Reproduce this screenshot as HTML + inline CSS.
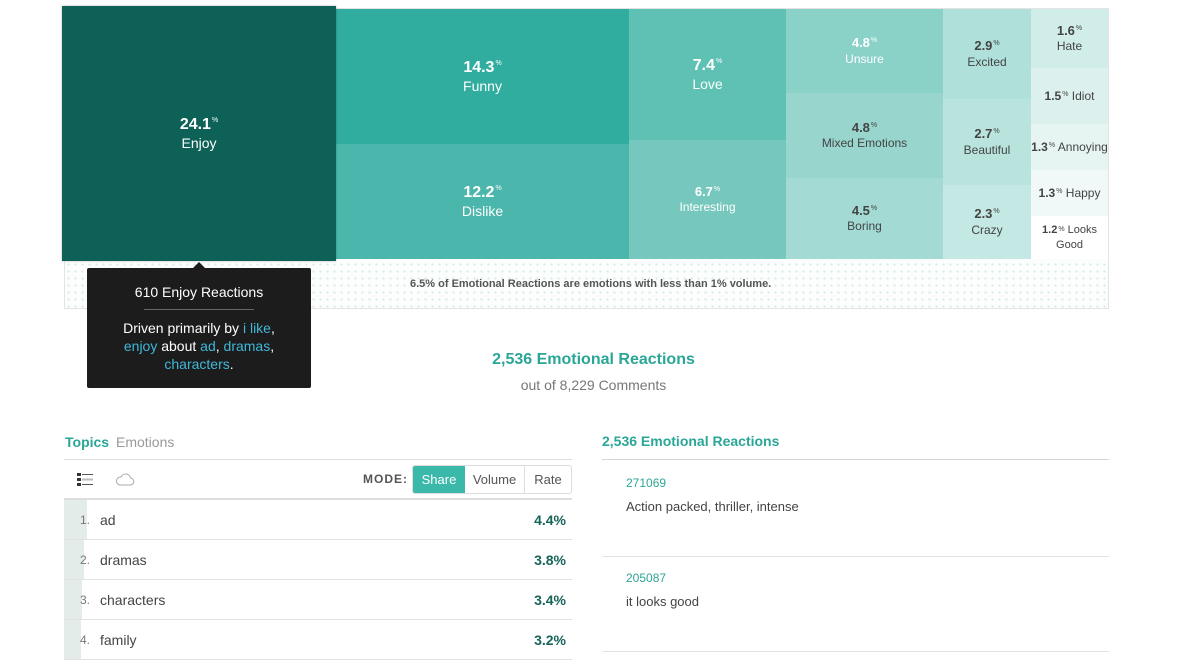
<!DOCTYPE html>
<html><head><meta charset="utf-8"><style>
*{box-sizing:border-box;margin:0;padding:0}
body{width:1177px;height:662px;overflow:hidden;background:#fff;font-family:"Liberation Sans",sans-serif;position:relative;color:#444}
.a{position:absolute}
.c{position:absolute;display:flex;flex-direction:column;align-items:center;justify-content:center;text-align:center;line-height:1.25}
.c b{font-size:16px;font-weight:bold}
.c b sup{font-size:7px;font-weight:normal;vertical-align:top;position:relative;top:2px;margin-left:1px}
.c span{font-size:14px}
.m b{font-size:13px}.m span{font-size:12px}
.s{font-size:12px}
.s b{font-size:12px}
.w{color:#fff}.d{color:#444}
.dots{background-color:#fcfefd;background-image:radial-gradient(#d6ebe7 1px,transparent 1.2px);background-size:7px 7px}
.hl{color:#3fb8d9}
.row{position:absolute;left:64px;width:508px;height:40px;border-bottom:1px solid #e2e2e2;font-size:14px}
.row .bar{position:absolute;left:0;top:0;bottom:0;background:#e4ecea}
.row .n{position:absolute;left:16px;top:13px;font-size:12px;color:#777}
.row .t{position:absolute;left:36px;top:12px;color:#444}
.row .v{position:absolute;right:6px;top:12px;color:#17655a;font-weight:bold}
</style></head><body>
<div class="a dots" style="left:64px;top:8px;width:1045px;height:301px;border:1px solid #e3e3e3"></div>
<div class="c w" style="left:336px;top:9px;width:293px;height:135px;background:#31ada0"><b>14.3<sup>%</sup></b><span>Funny</span></div>
<div class="c w" style="left:336px;top:144px;width:293px;height:115px;background:#4bb6ab"><b>12.2<sup>%</sup></b><span>Dislike</span></div>
<div class="c w" style="left:629px;top:9px;width:157px;height:131px;background:#5fc0b4"><b>7.4<sup>%</sup></b><span>Love</span></div>
<div class="c w m" style="left:629px;top:140px;width:157px;height:119px;background:#76c8be"><b>6.7<sup>%</sup></b><span>Interesting</span></div>
<div class="c w m" style="left:786px;top:9px;width:157px;height:84px;background:#8ad1c8"><b>4.8<sup>%</sup></b><span>Unsure</span></div>
<div class="c d m" style="left:786px;top:93px;width:157px;height:85px;background:#97d5cd"><b>4.8<sup>%</sup></b><span>Mixed Emotions</span></div>
<div class="c d m" style="left:786px;top:178px;width:157px;height:81px;background:#a3dbd4"><b>4.5<sup>%</sup></b><span>Boring</span></div>
<div class="c d m" style="left:943px;top:9px;width:88px;height:90px;background:#afe0da"><b>2.9<sup>%</sup></b><span>Excited</span></div>
<div class="c d m" style="left:943px;top:99px;width:88px;height:86px;background:#b9e4de"><b>2.7<sup>%</sup></b><span>Beautiful</span></div>
<div class="c d m" style="left:943px;top:185px;width:88px;height:74px;background:#c4e8e3"><b>2.3<sup>%</sup></b><span>Crazy</span></div>
<div class="c d m" style="left:1031px;top:9px;width:77px;height:59px;background:#d1ede9"><b>1.6<sup>%</sup></b><span>Hate</span></div>
<div class="c d s" style="left:1031px;top:68px;width:77px;height:56px;background:#dcf1ee"><div><b>1.5<sup>%</sup></b> Idiot</div></div>
<div class="c d s" style="left:1031px;top:124px;width:77px;height:46px;background:#e6f5f2"><div style="white-space:nowrap"><b>1.3<sup>%</sup></b> Annoying</div></div>
<div class="c d s" style="left:1031px;top:170px;width:77px;height:46px;background:#f0f9f7"><div><b>1.3<sup>%</sup></b> Happy</div></div>
<div class="c d s" style="left:1031px;top:216px;width:77px;height:43px;background:#fff;font-size:11px;line-height:1.35"><div><b style="font-size:11px">1.2<sup>%</sup></b> Looks<br>Good</div></div>
<div class="c w" style="left:62px;top:6px;width:274px;height:255px;background:#0d6157;box-shadow:0 0 2px rgba(0,0,0,.3)"><b>24.1<sup>%</sup></b><span>Enjoy</span></div>
<div class="a" style="left:410px;top:278px;font-size:11px;color:#555;font-weight:bold">6.5% of Emotional Reactions are emotions with less than 1% volume.</div>
<div class="a" style="left:193px;top:262px;width:0;height:0;border-left:6px solid transparent;border-right:6px solid transparent;border-bottom:6px solid #1c1c1c"></div>
<div class="a" style="left:87px;top:268px;width:224px;height:120px;background:#1c1c1c;border-radius:2px;color:#fff;text-align:center;font-size:14px">
<div style="margin-top:16px">610 Enjoy Reactions</div>
<div style="margin:9px auto 0;width:110px;border-top:1px solid #666"></div>
<div style="margin-top:9px;line-height:18px">Driven primarily by <span class="hl">i like</span>,<br><span class="hl">enjoy</span> about <span class="hl">ad</span>, <span class="hl">dramas</span>,<br><span class="hl">characters</span>.</div>
</div>
<div class="a" style="left:0;width:1177px;top:351px;text-align:center;padding-left:10px;font-size:16px;font-weight:bold;color:#2aa697">2,536 Emotional Reactions</div>
<div class="a" style="left:0;width:1177px;top:377px;text-align:center;padding-left:10px;font-size:14px;color:#777">out of 8,229 Comments</div>
<div class="a" style="left:65px;top:434px;font-size:14px;color:#2aa697;font-weight:bold">Topics</div>
<div class="a" style="left:116px;top:434px;font-size:14px;color:#999">Emotions</div>
<div class="a" style="left:64px;top:459px;width:508px;border-top:1px solid #ddd"></div>
<svg class="a" style="left:76px;top:472px" width="18" height="16"><rect x="1" y="1" width="4" height="3" fill="#333"/><rect x="1" y="6" width="4" height="3" fill="#333"/><rect x="1" y="11" width="4" height="3" fill="#333"/><line x1="6" y1="2.5" x2="17" y2="2.5" stroke="#555"/><line x1="6" y1="7.5" x2="17" y2="7.5" stroke="#bbb" stroke-width="2"/><line x1="6" y1="12.5" x2="17" y2="12.5" stroke="#555"/></svg>
<svg class="a" style="left:115px;top:471px" width="20" height="16"><path d="M5 14 H15 A3.5 3.5 0 0 0 15.5 7 A5 5 0 0 0 6 6 A4 4 0 0 0 5 14 Z" fill="none" stroke="#aaa" stroke-width="1"/></svg>
<div class="a" style="left:363px;top:472px;font-size:12px;font-weight:bold;color:#555;letter-spacing:1px">MODE:</div>
<div class="a" style="left:412px;top:465px;width:160px;height:29px;border:1px solid #ddd;border-radius:3px;font-size:13px;display:flex;overflow:hidden">
<div style="width:52px;background:#3ab8aa;color:#fff;text-align:center;line-height:27px">Share</div>
<div style="width:60px;color:#555;text-align:center;line-height:27px;border-right:1px solid #ddd">Volume</div>
<div style="flex:1;color:#555;text-align:center;line-height:27px">Rate</div></div>
<div class="a" style="left:64px;top:498px;width:508px;border-top:2px solid #ddd"></div>
<div class="row" style="top:500px"><div class="bar" style="width:23px"></div><span class="n">1.</span><span class="t">ad</span><span class="v">4.4%</span></div>
<div class="row" style="top:540px"><div class="bar" style="width:20px"></div><span class="n">2.</span><span class="t">dramas</span><span class="v">3.8%</span></div>
<div class="row" style="top:580px"><div class="bar" style="width:18px"></div><span class="n">3.</span><span class="t">characters</span><span class="v">3.4%</span></div>
<div class="row" style="top:620px"><div class="bar" style="width:17px"></div><span class="n">4.</span><span class="t">family</span><span class="v">3.2%</span></div>
<div class="a" style="left:602px;top:433px;font-size:14px;font-weight:bold;color:#2aa697">2,536 Emotional Reactions</div>
<div class="a" style="left:602px;top:459px;width:507px;border-top:1px solid #d6d6d6"></div>
<div class="a" style="left:626px;top:476px;font-size:12px;color:#2aa697">271069</div>
<div class="a" style="left:626px;top:499px;font-size:13px;color:#444">Action packed, thriller, intense</div>
<div class="a" style="left:602px;top:556px;width:507px;border-top:1px solid #e2e2e2"></div>
<div class="a" style="left:626px;top:571px;font-size:12px;color:#2aa697">205087</div>
<div class="a" style="left:626px;top:594px;font-size:13px;color:#444">it looks good</div>
<div class="a" style="left:602px;top:651px;width:507px;border-top:1px solid #e2e2e2"></div>
</body></html>
